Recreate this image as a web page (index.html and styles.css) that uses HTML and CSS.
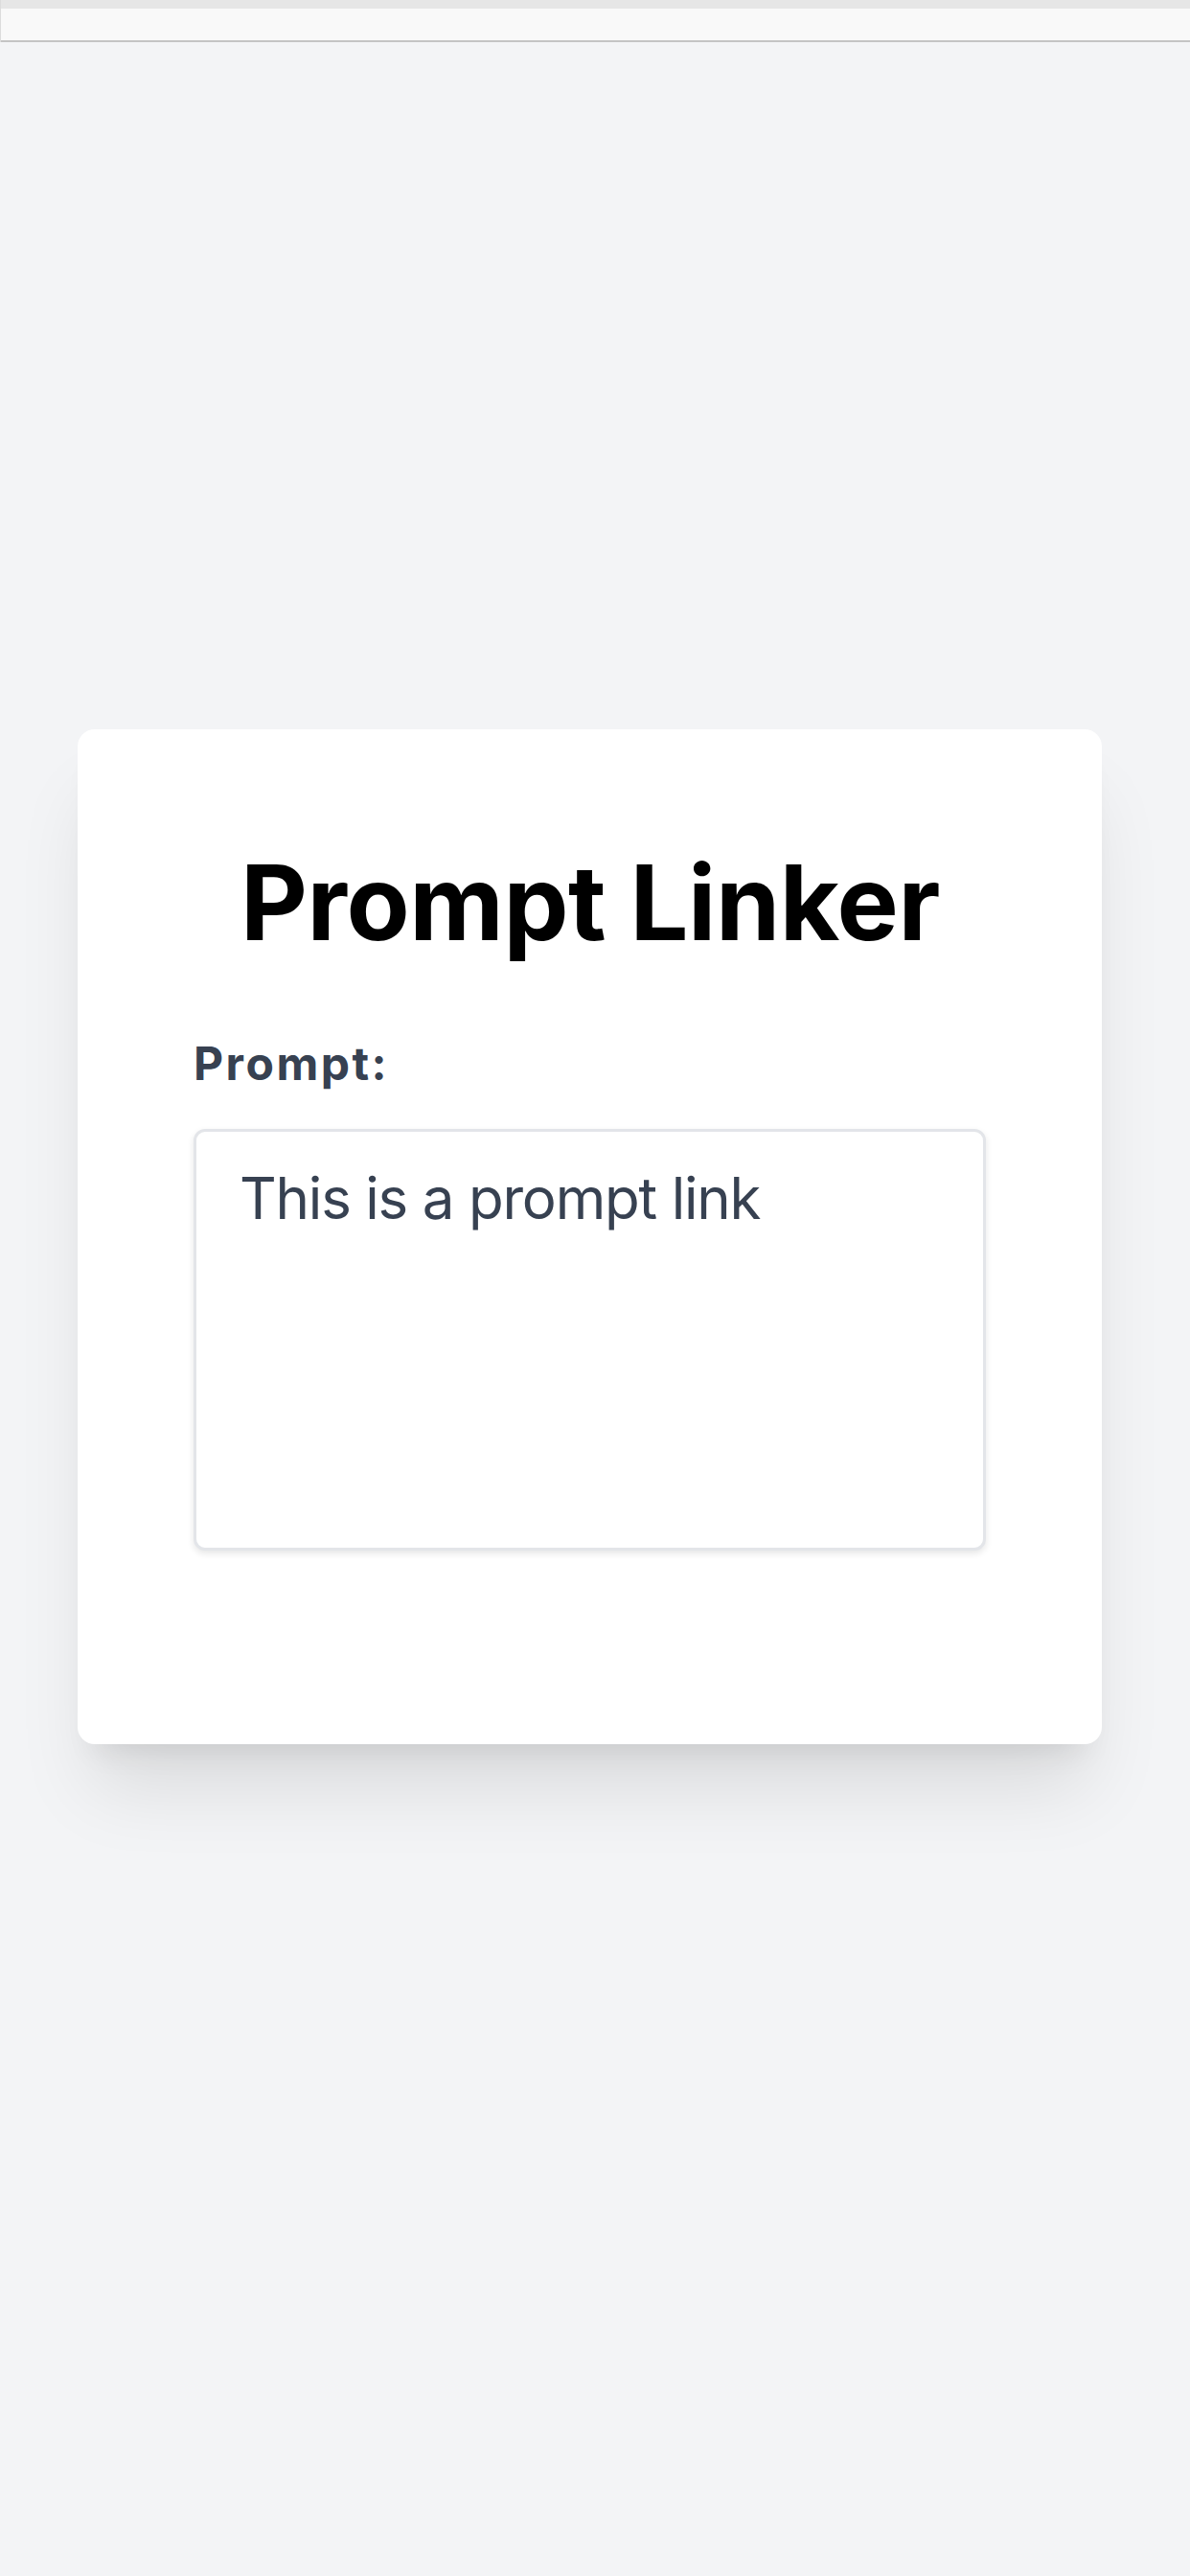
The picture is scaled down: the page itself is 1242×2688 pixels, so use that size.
FILE: index.html
```html
<!DOCTYPE html>
<html lang="en">
<head>
<meta charset="utf-8">
<title>Prompt Linker</title>
<link rel="stylesheet" href="styles.css">
</head>
<body>
<div class="browser-top">
  <div class="strip"></div>
  <div class="bar"></div>
</div>
<main class="page">
  <section class="card">
    <h1 class="title">Prompt Linker</h1>
    <label class="label" for="prompt">Prompt:</label>
    <textarea id="prompt" class="prompt-input">This is a prompt link</textarea>
  </section>
</main>
</body>
</html>
```

FILE: styles.css
```css
* { box-sizing: border-box; }
html, body {
  margin: 0;
  padding: 0;
  background: #f3f4f6;
  font-family: Inter, "Noto Sans", "Liberation Sans", sans-serif;
}
body {
  min-height: 2688px;
}
.browser-top {
  display: flex;
  flex-direction: column;
  border-left: 1px solid #dcdcdc;
}
.strip {
  height: 9px;
  background: #e6e6e6;
}
.bar {
  height: 35px;
  background: #f9f9f9;
  border-bottom: 2px solid #c4c4c4;
}
.page {
  display: flex;
  justify-content: center;
  padding: 717px 92px 0 81px;
}
.card {
  width: 1069px;
  height: 1059px;
  background: #ffffff;
  border-radius: 18px;
  padding: 121px 120px 0 121px;
  box-shadow: 0 60px 80px -15px rgba(0,0,0,0.10), 0 24px 30px -18px rgba(0,0,0,0.09);
  display: flex;
  flex-direction: column;
}
.title {
  margin: 0 0 72px 0;
  font-size: 108px;
  line-height: 120px;
  font-weight: 700;
  color: #000000;
  text-align: center;
  letter-spacing: -0.4px;
}
.label {
  display: block;
  font-size: 48px;
  line-height: 72px;
  font-weight: 700;
  color: #374151;
  letter-spacing: 2.5px;
  margin-bottom: 32px;
}
.prompt-input {
  display: block;
  width: 827px;
  height: 440px;
  border: 3px solid #e3e5e9;
  border-radius: 12px;
  box-shadow: 0 3px 7px rgba(0,0,0,0.10);
  padding: 27px 45px;
  font-family: Inter, "Noto Sans", "Liberation Sans", sans-serif;
  font-size: 60px;
  line-height: 84px;
  letter-spacing: -1.2px;
  color: #374151;
  background: #ffffff;
  resize: none;
  outline: none;
}
```
